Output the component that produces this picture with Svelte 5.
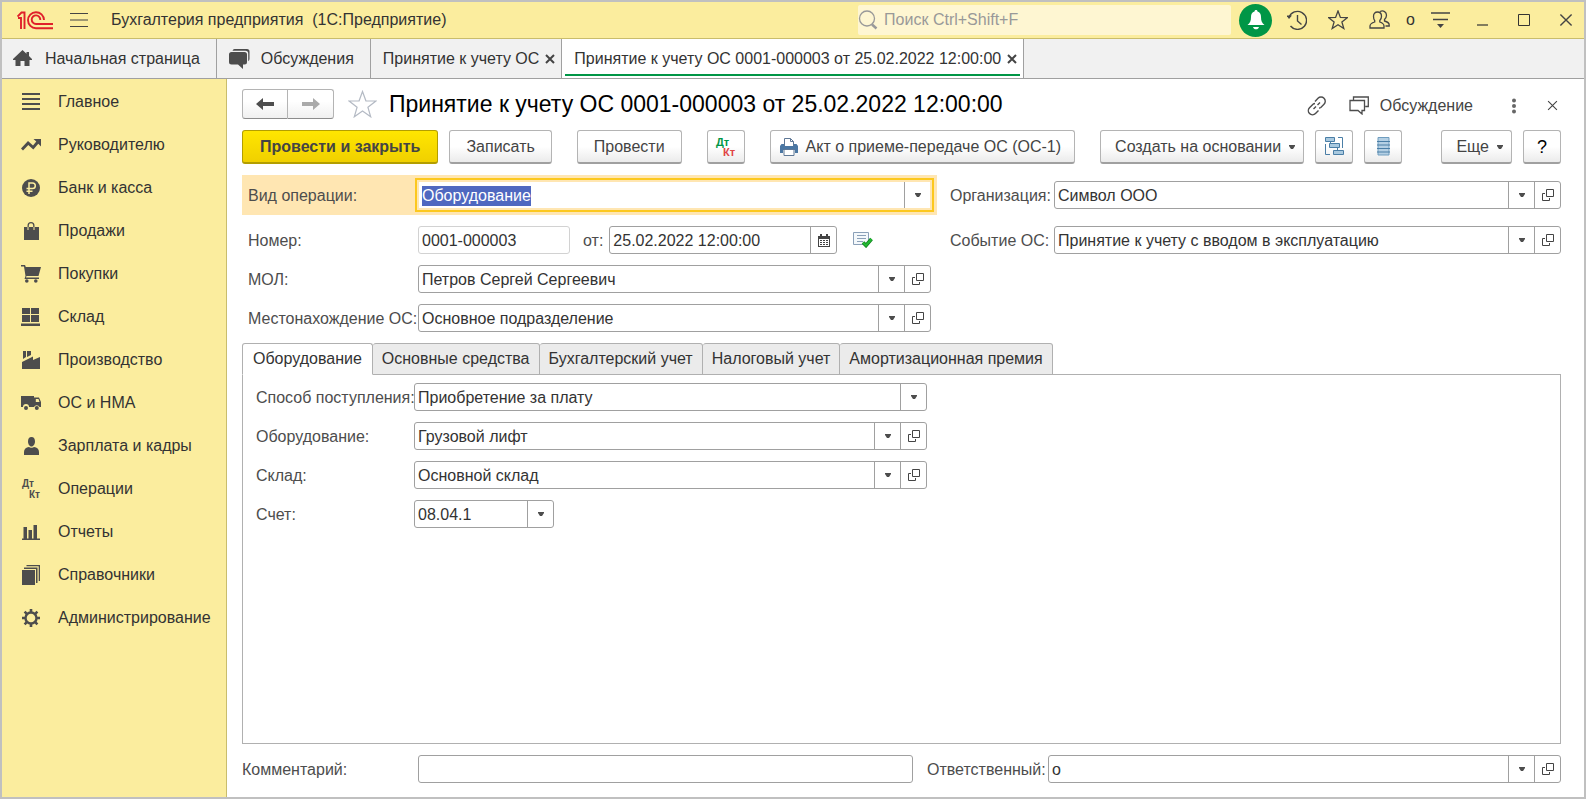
<script>
  import { onMount } from 'svelte';

  const sections = [
    { title: 'Главное', icon: 'lines' },
    { title: 'Руководителю', icon: 'trend' },
    { title: 'Банк и касса', icon: 'ruble' },
    { title: 'Продажи', icon: 'bag' },
    { title: 'Покупки', icon: 'cart' },
    { title: 'Склад', icon: 'boxes' },
    { title: 'Производство', icon: 'factory' },
    { title: 'ОС и НМА', icon: 'truck' },
    { title: 'Зарплата и кадры', icon: 'person' },
    { title: 'Операции', icon: 'dtkt' },
    { title: 'Отчеты', icon: 'chart' },
    { title: 'Справочники', icon: 'books' },
    { title: 'Администрирование', icon: 'gear' }
  ];

  const icons = {
    lines: 'M1 1h18v2H1zM1 6h18v2H1zM1 11h18v2H1zM1 16h18v2H1z',
    trend: 'M0 13.5L7 6l5 4.500 3.300-4L12.500 4H20v7.500l-2.700-2.700-5 5.700-5-4.500L2 15.500z',
    bag: 'M3 6h3.500v3h1V6h5v3h1V6H18v13H3zM6.500 6V4.500a3.500 3.500 0 0 1 7 0V6h-1.300V4.500a2.200 2.200 0 0 0-4.400 0V6z',
    cart: 'M0 1h4l.8 2H20l-2.500 9H5.500l-.5 1.500h13V15H3.500l1-3L3 2.500H0zM4 17a1.800 1.800 0 1 0 3.600 0a1.800 1.800 0 1 0-3.600 0zM13 17a1.800 1.800 0 1 0 3.600 0a1.800 1.800 0 1 0-3.600 0z',
    boxes: 'M1 1h8v6H1zM10 1h8v6h-8zM1 8h8v7H1zM10 8h8v7h-8zM0 16.500h19V19H0z',
    factory: 'M1 19v-7L12 6.500V10l7-3v12zM2 1h3v6L2 9zM6 1h4v4L6 7z',
    truck: 'M0 3h13v11H8a3 3 0 0 0-6 0H0zM13 4.500h5L20 9v5h-1.500a3 3 0 0 0-5.500 0zM14.800 6v3h3.700L17.500 6zM3 15a2 2 0 1 0 4 0a2 2 0 1 0-4 0zM13.800 15a2 2 0 1 0 4 0a2 2 0 1 0-4 0z',
    person: 'M10.500 1C13 1 14 3 14 5.500S12.500 10.500 10.500 10.500 7 8 7 5.500 8 1 10.500 1zM3 19v-3c0-3 2-4.500 5-5 1 1 4 1 5 0 3 .5 5 2 5 5v3z',
    chart: 'M1 16.500h1.500V5H6v11.500h1.500V8H11v8.500h1.500V3H16v13.500h3V18H1z',
    books: 'M1 5h13v15H1zM3 2.500h13.500V18H15V4H3zM5.500 0H19v16h-1.300V1.300H5.500z'
  };

  const documentTabs = [
    { title: 'Оборудование', id: 'equipment' },
    { title: 'Основные средства', id: 'assets' },
    { title: 'Бухгалтерский учет', id: 'accounting' },
    { title: 'Налоговый учет', id: 'tax' },
    { title: 'Амортизационная премия', id: 'bonus' }
  ];

  let activeTab = $state('equipment');
  let operationInput;

  onMount(() => {
    operationInput.focus();
    operationInput.select();
  });
</script>

{#snippet sectionIcon(name)}
  <svg class="icon" viewBox="0 0 20 20" width="20" height="20">
    {#if name === 'ruble'}
      <circle cx="10" cy="10" r="9" fill="currentColor" />
      <path d="M8 16V5h3.500a2.800 2.800 0 0 1 0 5.600H5.500M5.500 13.200h6" fill="none" stroke="#fbed9e" stroke-width="1.500" />
    {:else if name === 'dtkt'}
      <text x="1" y="8" class="mini">Дт</text>
      <text x="8" y="19" class="mini">Кт</text>
    {:else if name === 'gear'}
      <circle cx="10" cy="10" r="5.500" fill="none" stroke="currentColor" stroke-width="2.400" />
      <path
        d="M10 1v3M10 16v3M1 10h3M16 10h3M3.600 3.600l2.200 2.200M14.200 14.200l2.200 2.200M3.600 16.400l2.200-2.200M14.200 5.800l2.200-2.200"
        stroke="currentColor"
        stroke-width="2.600"
      />
    {:else}
      <path d={icons[name]} fill="currentColor" fill-rule="evenodd" />
    {/if}
  </svg>
{/snippet}

{#snippet caret()}
  <svg viewBox="0 0 6 4" width="6" height="4"><path d="M0 0h6v1L4 4H2L0 1z" fill="#4d4d4d" /></svg>
{/snippet}

{#snippet field(id, value, open = true)}
  <div class="field">
    <input {id} type="text" {value} />
    <button class="addon" aria-label="Выбрать из списка">{@render caret()}</button>
    {#if open}
      <button class="addon" aria-label="Открыть">
        <svg viewBox="0 0 12 12" width="12" height="12" fill="none" stroke="#444">
          <path d="M4.500.5h7v7h-7zM3 4.500H.5v7h7V9" />
        </svg>
      </button>
    {/if}
  </div>
{/snippet}

{#snippet cross(size, weight)}
  <svg viewBox="0 0 10 10" width={size} height={size}>
    <path d="M1 1l8 8M9 1l-8 8" stroke="#444" stroke-width={weight} />
  </svg>
{/snippet}

<div class="window">
  <header class="titlebar">
    <svg class="logo" viewBox="0 0 36 19" width="36" height="19" fill="none" stroke="#e0202a" stroke-width="1.900">
      <path d="M.5 5.500L4.500 1.500H7.500V18M1 7h3V18" />
      <path d="M27 9A8 8 0 1 0 19 17.200H36M23.300 9A4.300 4.300 0 1 0 19 13H36" />
    </svg>
    <button class="plain burger" aria-label="Главное меню">
      <svg viewBox="0 0 18 14" width="18" height="14"><path d="M0 .5h18M0 7h18M0 13.500h18" stroke="#444" stroke-width="1.200" /></svg>
    </button>
    <span class="app-name">Бухгалтерия предприятия&nbsp; (1С:Предприятие)</span>

    <label class="search">
      <svg viewBox="0 0 20 20" width="20" height="20" fill="none" stroke="#999">
        <circle cx="9" cy="8.500" r="7.500" stroke-width="1.300" />
        <path d="M14 14.500l4.500 4" stroke-width="2.500" />
      </svg>
      <input type="search" placeholder="Поиск Ctrl+Shift+F" aria-label="Поиск" />
    </label>

    <button class="bell" aria-label="Уведомления">
      <svg viewBox="0 0 20 20" width="20" height="20" fill="#fff">
        <path d="M10 0c1 0 1.500.7 1.500 1.600C14 2.300 15 4.500 15 7c0 4 1 6 3.500 8h-17C4 13 5 11 5 7c0-2.500 1-4.700 3.500-5.400C8.500.7 9 0 10 0zM7 17h6c-.5 1.500-1.500 2.300-3 2.300S7.500 18.500 7 17z" />
      </svg>
    </button>

    <div class="tools">
      <button class="plain" aria-label="История">
        <svg viewBox="0 0 20 20" width="20" height="20" fill="none" stroke="#444" stroke-width="1.400">
          <path d="M2 7.500A9 9 0 1 1 3.500 16M10.500 5v6l4 3.500" />
          <path d="M-.5 5.500h5.500L2 9z" fill="#444" stroke="none" />
        </svg>
      </button>
      <button class="plain" aria-label="Избранное">
        <svg viewBox="0 0 20 20" width="20" height="20" fill="none" stroke="#444" stroke-width="1.300">
          <path d="M10 1l2.400 6.400 6.900.3-5.400 4.200 1.900 6.600L10 14.700l-5.800 3.800 1.900-6.600L.7 7.700l6.900-.3z" />
        </svg>
      </button>
      <button class="plain" aria-label="Пользователи">
        <svg viewBox="0 0 21 20" width="21" height="20" fill="none" stroke="#444" stroke-width="1.300">
          <path d="M8.500 2c2.500 0 4 1.800 4 4.200 0 2-.7 3.300-1.700 4.300v1.500c2.500.8 4.200 1.500 4.200 4V18H1v-2c0-2.500 2-3.200 4.700-4v-1.500C4.700 9.500 4.500 8 4.500 6.200 4.500 3.800 6 2 8.500 2z" />
          <path d="M11 1.500c3.500-1.500 6.500.5 6.500 3.700 0 2-1 3.300-2 4.300v1.500c3 .8 4.700 1.500 4.700 4v1H16.500" />
        </svg>
      </button>
      <span class="user">о</span>
      <button class="plain" aria-label="Сервис">
        <svg viewBox="0 0 19 16" width="19" height="16">
          <path d="M0 1h19M2 7.500h15" stroke="#444" stroke-width="1.400" />
          <path d="M6 12h7l-3.500 4z" fill="#444" />
        </svg>
      </button>
    </div>

    <div class="window-controls">
      <button class="plain" aria-label="Свернуть">
        <svg viewBox="0 0 12 12" width="12" height="12"><path d="M0 11h11" stroke="#333" stroke-width="1.200" /></svg>
      </button>
      <button class="plain" aria-label="Развернуть">
        <svg viewBox="0 0 12 12" width="12" height="12"><path d="M.5.5h11v11H.5z" fill="none" stroke="#333" /></svg>
      </button>
      <button class="plain" aria-label="Закрыть программу">{@render cross(14, 1)}</button>
    </div>
  </header>

  <nav class="open-tabs" aria-label="Открытые окна">
    <button class="open-tab home">
      <svg viewBox="0 0 19 17" width="19" height="17" fill="#4d4d4d">
        <path d="M9.500 0l4 3.700V2H16v4l3 3v1h-2.500v6h-5v-5h-4v5h-5v-6H0V9z" />
      </svg>
      Начальная страница
    </button>
    <button class="open-tab talks">
      <svg viewBox="0 0 21 20" width="21" height="20" fill="#4d4d4d">
        <path d="M5.500 0H18a2.500 2.500 0 0 1 2.500 2.500V10a2.500 2.500 0 0 1-1.300 2.200V4.500a2.700 2.700 0 0 0-2.700-2.700H3.500A2.500 2.500 0 0 1 5.500 0z" />
        <path d="M2.500 3h13A2.500 2.500 0 0 1 18 5.500V13a2.500 2.500 0 0 1-2.500 2.500H14V20l-5-4.500H2.500A2.500 2.500 0 0 1 0 13V5.500A2.500 2.500 0 0 1 2.500 3z" />
      </svg>
      Обсуждения
    </button>
    <div class="open-tab">
      <button class="plain">Принятие к учету ОС</button>
      <button class="plain" aria-label="Закрыть вкладку">{@render cross(10, 2)}</button>
    </div>
    <div class="open-tab current">
      <button class="plain">Принятие к учету ОС 0001-000003 от 25.02.2022 12:00:00</button>
      <button class="plain" aria-label="Закрыть вкладку">{@render cross(10, 2)}</button>
    </div>
  </nav>

  <div class="body">
    <nav class="sections" aria-label="Разделы">
      {#each sections as section}
        <a href="#{section.icon}">{@render sectionIcon(section.icon)}{section.title}</a>
      {/each}
    </nav>

    <main>
      <div class="heading">
        <div class="history">
          <button aria-label="Назад">
            <svg viewBox="0 0 18 12" width="18" height="12"><path d="M7 0v4H18v4H7v4L0 6z" fill="#4d4d4d" /></svg>
          </button>
          <button aria-label="Вперед" disabled>
            <svg viewBox="0 0 18 12" width="18" height="12"><path d="M11 0v4H0v4h11v4L18 6z" fill="#aaa" /></svg>
          </button>
        </div>
        <button class="plain" aria-label="Добавить в избранное">
          <svg viewBox="0 0 29 28" width="29" height="28" fill="none" stroke="#b4bac4" stroke-width="1.200">
            <path d="M14.500 1.500l3.400 9.300 10 .2-8 6.200 2.800 9.600-8.200-5.700-8.200 5.700 2.800-9.600-8-6.200 10-.2z" />
          </svg>
        </button>
        <h1>Принятие к учету ОС 0001-000003 от 25.02.2022 12:00:00</h1>
        <div class="heading-tools">
          <button class="plain" aria-label="Получить ссылку">
            <svg viewBox="0 0 20 20" width="20" height="20" fill="none" stroke="#4d4d4d" stroke-width="1.400">
              <path d="M8 5.500l3-3.200a4.200 4.200 0 0 1 6 0 4.200 4.200 0 0 1 0 6l-3.200 3.200a3 3 0 0 1-1.800.6" />
              <path d="M8 7.500a3 3 0 0 0-2 .8l-3.500 3.500a4.200 4.200 0 0 0 0 5.800 4.200 4.200 0 0 0 6 0l3-3" />
              <path d="M6.500 13l2.500-2.500M10.500 9L13 6.500" />
            </svg>
          </button>
          <button class="plain discuss">
            <svg viewBox="0 0 20 19" width="20" height="19" fill="none" stroke="#4d4d4d" stroke-width="1.300">
              <path d="M1 4.500h14.500v10h-2.500v3.500l-4-3.500H1zM4.500 4V1h14.800v9.500h-3" />
            </svg>
            Обсуждение
          </button>
          <button class="plain more" aria-label="Дополнительно">
            <svg viewBox="0 0 4 16" width="4" height="16" fill="#666">
              <circle cx="2" cy="2.500" r="2" /><circle cx="2" cy="8" r="2" /><circle cx="2" cy="13.500" r="2" />
            </svg>
          </button>
          <button class="plain" aria-label="Закрыть документ">{@render cross(11, 1)}</button>
        </div>
      </div>

      <div class="toolbar">
        <div class="group">
          <button class="btn primary">Провести и закрыть</button>
          <button class="btn">Записать</button>
        </div>
        <button class="btn">Провести</button>
        <button class="btn square" aria-label="Показать проводки">
          <svg viewBox="0 0 22 20" width="22" height="20">
            <text x="1" y="9" class="mini debit">Дт</text>
            <text x="8" y="19" class="mini credit">Кт</text>
          </svg>
        </button>
        <button class="btn print">
          <svg viewBox="0 0 18 18" width="18" height="18">
            <path d="M4.500 8V.5h6l3 3V8M10.500.5v3h3" fill="#fff" stroke="#5f7896" />
            <path d="M1.500 6H4v2h10V6h2.500L18 8v7h-3v-3H3v3H0V8z" fill="#4b77a3" />
            <path d="M4 11.500h10v6H4z" fill="#fff" stroke="#5f7896" />
          </svg>
          Акт о приеме-передаче ОС (ОС-1)
        </button>
        <div class="group">
          <button class="btn dropdown">Создать на основании {@render caret()}</button>
          <button class="btn square" aria-label="Структура подчиненности">
            <svg viewBox="0 0 19 19" width="19" height="19" fill="#a9c9df" stroke="#4a7ea6">
              <path d="M.5.5h9v4h-9zM4.500 6.500h10v4h-10zM8.500 13.500h10v4h-10z" />
              <path d="M13 .5h4.500V11M5 17.500H.5V7M5.500 4.500v2M12.500 10.500v3" fill="none" />
            </svg>
          </button>
          <button class="btn square" aria-label="Реестр">
            <svg viewBox="0 0 13 19" width="13" height="19">
              <path d="M1 .5h11v17.500H1z" fill="#b5d0e4" stroke="#6f9dbf" />
              <path d="M0 4.500h13M0 8h13M0 11.500h13M0 15h13" stroke="#4a7ea6" />
            </svg>
          </button>
        </div>
        <div class="group last">
          <button class="btn dropdown">Еще {@render caret()}</button>
          <button class="btn square help" aria-label="Справка">?</button>
        </div>
      </div>

      <div class="row focused-row">
        <div class="cell focused">
          <label for="operation">Вид операции:</label>
          <div class="field">
            <input id="operation" type="text" value="Оборудование" bind:this={operationInput} />
            <button class="addon" aria-label="Выбрать из списка">{@render caret()}</button>
          </div>
        </div>
        <div class="cell side">
          <label for="organization">Организация:</label>
          {@render field('organization', 'Символ ООО')}
        </div>
      </div>

      <div class="row">
        <div class="cell">
          <label for="number">Номер:</label>
          <div class="field number"><input id="number" type="text" value="0001-000003" /></div>
          <label class="from" for="date">от:</label>
          <div class="field date">
            <input id="date" type="text" value="25.02.2022 12:00:00" />
            <button class="addon" aria-label="Календарь">
              <svg viewBox="0 0 12 13" width="12" height="13">
                <path d="M0 2h12v11H0z" fill="#444" />
                <path d="M2 0h2v2H2zM8 0h2v2H8z" fill="#444" />
                <path d="M1 5h10v7H1z" fill="#fff" />
                <path d="M2 6h2v1H2zM5 6h2v1H5zM8 6h2v1H8zM2 8h2v1H2zM5 8h2v1H5zM8 8h2v1H8zM2 10h2v1H2zM5 10h2v1H5zM8 10h2v1H8z" fill="#444" />
              </svg>
            </button>
          </div>
          <svg class="posted" viewBox="0 0 20 16" width="20" height="16" role="img" aria-label="Проведен">
            <path d="M.5.5h15v12H.5z" fill="#f4f8fb" stroke="#8ba0b8" />
            <path d="M4 3.500h9M4 6.500h9M4 9.500h6" stroke="#8ba0b8" />
            <path d="M10 10.500l3 3 5.500-6.500" fill="none" stroke="#12821f" stroke-width="3.600" />
            <path d="M10 10.500l3 3 5.500-6.500" fill="none" stroke="#22b832" stroke-width="2" />
          </svg>
        </div>
        <div class="cell side">
          <label for="event">Событие ОС:</label>
          {@render field('event', 'Принятие к учету с вводом в эксплуатацию')}
        </div>
      </div>

      <div class="row">
        <div class="cell">
          <label for="person">МОЛ:</label>
          {@render field('person', 'Петров Сергей Сергеевич')}
        </div>
      </div>

      <div class="row">
        <div class="cell">
          <label for="place">Местонахождение ОС:</label>
          {@render field('place', 'Основное подразделение')}
        </div>
      </div>

      <section class="pages">
        <div class="page-tabs" role="tablist">
          {#each documentTabs as tab}
            <button
              role="tab"
              class:active={activeTab === tab.id}
              aria-selected={activeTab === tab.id}
              onclick={() => (activeTab = tab.id)}
            >{tab.title}</button>
          {/each}
        </div>
        <div class="page" role="tabpanel">
          {#if activeTab === 'equipment'}
            <div class="line">
              <label for="receipt">Способ поступления:</label>
              {@render field('receipt', 'Приобретение за плату', false)}
            </div>
            <div class="line">
              <label for="equipment">Оборудование:</label>
              {@render field('equipment', 'Грузовой лифт')}
            </div>
            <div class="line">
              <label for="warehouse">Склад:</label>
              {@render field('warehouse', 'Основной склад')}
            </div>
            <div class="line short">
              <label for="account">Счет:</label>
              {@render field('account', '08.04.1', false)}
            </div>
          {/if}
        </div>
      </section>

      <div class="footer">
        <div class="comment">
          <label for="comment">Комментарий:</label>
          <div class="field"><input id="comment" type="text" /></div>
        </div>
        <div class="responsible">
          <label for="responsible">Ответственный:</label>
          {@render field('responsible', 'о')}
        </div>
      </div>
    </main>
  </div>
</div>

<style>
  :global(body) {
    margin: 0;
  }

  .window {
    display: flex;
    flex-direction: column;
    min-height: 100vh;
    box-sizing: border-box;
    border: 2px solid #c0c0c0;
    background: #fff;
    color: #333;
    font: 16px/20px 'Liberation Sans', Arial, sans-serif;
  }

  button,
  input {
    font: inherit;
    color: inherit;
  }

  button {
    cursor: pointer;
  }

  svg {
    display: block;
    flex: none;
  }

  .plain {
    display: flex;
    align-items: center;
    padding: 0;
    border: 0;
    background: none;
    white-space: nowrap;
  }

  .mini {
    font-size: 10px;
    font-weight: bold;
    fill: #4d4d4d;
  }

  .debit {
    font-size: 11px;
    fill: #009646;
  }

  .credit {
    font-size: 11px;
    fill: #e04545;
  }

  /* Title bar */
  .titlebar {
    display: flex;
    align-items: center;
    height: 36px;
    padding: 0 11px 0 15px;
    background: #fbed9e;
    border-bottom: 1px solid #c9bd6c;
  }

  .burger {
    margin: 0 23px 0 17px;
  }

  .app-name {
    white-space: nowrap;
  }

  .search {
    display: flex;
    align-items: center;
    gap: 6px;
    width: 373px;
    height: 30px;
    margin-left: auto;
    background: #fef6d2;
    border-radius: 2px;
  }

  .search input {
    flex: 1;
    min-width: 0;
    padding: 0;
    border: 0;
    outline: none;
    background: none;
  }

  .search input::placeholder {
    color: #999;
    opacity: 1;
  }

  .bell {
    display: grid;
    place-items: center;
    width: 33px;
    height: 33px;
    margin: 0 15px 0 8px;
    padding: 0;
    border: 0;
    border-radius: 50%;
    background: #009646;
  }

  .tools {
    display: flex;
    align-items: center;
    gap: 21px;
  }

  .user {
    margin: 0 -5px;
  }

  .window-controls {
    display: flex;
    align-items: center;
    gap: 29px;
    margin-left: 27px;
  }

  /* Open windows */
  .open-tabs {
    display: flex;
    height: 39px;
    background: #f1f1f1;
    border-bottom: 1px solid #a0a0a0;
  }

  .open-tab {
    display: flex;
    align-items: center;
    gap: 6px;
    padding: 0 6px 0 12px;
    border: 0;
    border-right: 1px solid #a0a0a0;
    background: none;
    white-space: nowrap;
  }

  .home {
    gap: 13px;
    padding: 0 16px 0 11px;
  }

  .talks {
    gap: 11px;
    padding: 0 16px 0 12px;
  }

  .current {
    background: linear-gradient(#009646, #009646) center bottom 2px / calc(100% - 6px) 2px no-repeat #fff;
  }

  /* Sections */
  .body {
    display: flex;
    flex: 1;
  }

  .sections {
    flex: none;
    width: 224px;
    padding-top: 1px;
    background: #fbed9e;
    border-right: 1px solid #c9bd6c;
  }

  .sections a {
    display: flex;
    align-items: center;
    gap: 17px;
    height: 43px;
    padding-left: 19px;
    color: #333;
    text-decoration: none;
  }

  .icon {
    color: #4d4d4d;
  }

  /* Document */
  main {
    display: flex;
    flex: 1;
    flex-direction: column;
    gap: 11px;
    min-width: 0;
    padding: 10px 23px 14px 15px;
  }

  .heading {
    display: flex;
    align-items: center;
    height: 30px;
  }

  .history {
    display: flex;
    margin-right: 14px;
  }

  .history button {
    display: grid;
    place-items: center;
    width: 46px;
    height: 30px;
    padding: 0;
    border: 1px solid #b4b4b4;
    border-bottom-color: #8c8c8c;
    border-radius: 3px 0 0 3px;
    background: linear-gradient(#fff 40%, #f0f0f0);
  }

  .history button + button {
    border-left: 0;
    border-radius: 0 3px 3px 0;
  }

  h1 {
    margin: 0 0 0 12px;
    font-size: 23px;
    font-weight: normal;
    line-height: 28px;
    color: #000;
    white-space: nowrap;
  }

  .heading-tools {
    display: flex;
    align-items: center;
    gap: 22px;
    margin: 0 3px 0 auto;
    padding-top: 3px;
    color: #444;
  }

  .discuss {
    gap: 11px;
  }

  .more {
    margin: 0 9px 0 17px;
  }

  .toolbar {
    display: flex;
    gap: 25px;
  }

  .group {
    display: flex;
    gap: 11px;
  }

  .last {
    margin-left: auto;
  }

  .btn {
    display: flex;
    align-items: center;
    justify-content: center;
    height: 34px;
    padding: 0 16px;
    border: 1px solid #b4b4b4;
    border-bottom: 2px solid #a0a0a0;
    border-radius: 3px;
    background: linear-gradient(#fff 50%, #ebebeb);
    color: #444;
    white-space: nowrap;
  }

  .primary {
    padding: 0 17px;
    border-color: #b39e00;
    background: linear-gradient(#ffe600, #f0d000);
    font-weight: bold;
  }

  .square {
    width: 38px;
    padding: 0;
  }

  .help {
    color: #000;
    font-size: 18px;
  }

  .print {
    gap: 8px;
    padding: 0 13px 0 9px;
  }

  .dropdown {
    gap: 8px;
    padding: 0 8px 0 14px;
  }

  /* Fields */
  label {
    color: #4d4d4d;
    white-space: nowrap;
  }

  .row {
    display: grid;
    grid-template-columns: 695fr 624fr;
  }

  .cell {
    display: flex;
    align-items: center;
    min-width: 0;
    padding: 0 6px;
  }

  .cell > label,
  .line > label,
  .footer label {
    flex: none;
    padding-top: 2px;
  }

  .cell > label:first-child {
    width: 170px;
  }

  .focused-row .cell {
    padding-top: 6px;
    padding-bottom: 6px;
  }

  .focused {
    background: #ffe6b2;
  }

  .row .side {
    padding-right: 0;
    padding-left: 13px;
  }

  .side > label:first-child {
    width: 104px;
  }

  .field {
    display: flex;
    flex: 1;
    min-width: 0;
    height: 28px;
    box-sizing: border-box;
    overflow: hidden;
    border: 1px solid #a0a0a0;
    border-radius: 3px;
    background: #fff;
  }

  .field input {
    flex: 1;
    min-width: 0;
    padding: 2px 3px 0;
    border: 0;
    outline: none;
    background: none;
  }

  .field input::selection {
    background: #4f68c0;
    color: #fff;
  }

  .addon {
    display: grid;
    place-items: center;
    flex: none;
    width: 26px;
    padding: 0;
    border: 0;
    border-left: 1px solid #a0a0a0;
    background: none;
  }

  .focused .field {
    border-color: #ffe6b2;
    border-radius: 0;
    outline: 2px solid #fcc81e;
    outline-offset: 1px;
  }

  .number {
    flex: none;
    width: 152px;
    border-color: #d2d2d2;
  }

  .from {
    margin: 0 6px 0 13px;
  }

  .date {
    flex: none;
    width: 228px;
  }

  .posted {
    margin-left: 16px;
  }

  /* Document pages */
  .pages {
    display: flex;
    flex: 1;
    flex-direction: column;
  }

  .page-tabs {
    display: flex;
    height: 32px;
  }

  .page-tabs button {
    padding: 0 9px;
    border: 1px solid #b0b0b0;
    border-left-width: 0;
    border-radius: 3px 3px 0 0;
    background: #ebebeb;
  }

  .page-tabs button:first-child {
    padding: 0 10px;
    border-left-width: 1px;
  }

  .page-tabs .active {
    border-bottom-color: #fff;
    background: #fff;
    z-index: 1;
  }

  .page {
    display: flex;
    flex: 1;
    flex-direction: column;
    gap: 11px;
    margin-top: -1px;
    padding: 8px 13px;
    border: 1px solid #b0b0b0;
  }

  .line {
    display: flex;
    align-items: center;
    width: 52%;
  }

  .line label {
    width: 158px;
  }

  .short .field {
    flex: none;
    width: 140px;
  }

  .footer {
    display: grid;
    grid-template-columns: 671fr 634fr;
    gap: 14px;
  }

  .comment,
  .responsible {
    display: flex;
    align-items: center;
    min-width: 0;
  }

  .comment label {
    width: 176px;
  }

  .responsible label {
    width: 121px;
  }
</style>
